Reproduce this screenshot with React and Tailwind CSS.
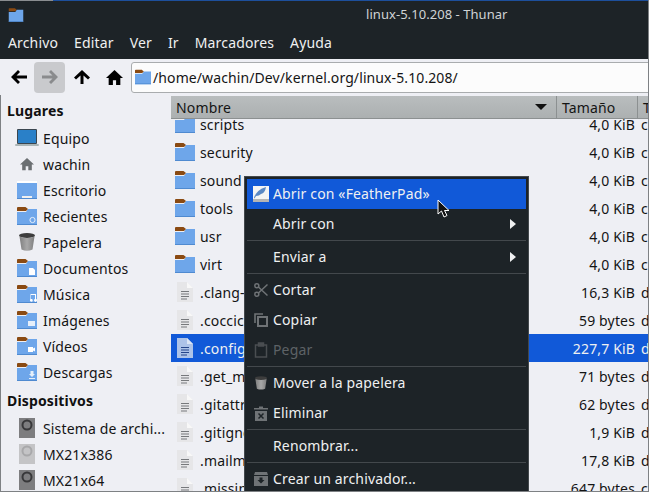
const Folder = ({ badge, className = "" }) => (
  <svg width="20" height="20" viewBox="0 0 20 20" className={"shrink-0 " + className}>
    <path d="M0 6 L9 6 L11 3 H20 V19 H0 Z" fill="#6ea6ea" />
    <rect x="0" y="18" width="20" height="1" fill="#4f8ad0" />
    <path d="M0 2 Q0 1 1 1 H8.5 L11 3 L9 5 H0 Z" fill="#8a4a12" />
    {badge === "clock" && (
      <circle cx="15.5" cy="14" r="2.6" fill="none" stroke="#e6effa" strokeWidth="1" />
    )}
    {badge === "doc" && <path d="M12 10 H16 L18 12 V17 H12 Z" fill="#fff" />}
    {badge === "music" && (
      <path d="M13 16 a1.4 1.4 0 1 0 1 -1 V11 H18 V15 a1.4 1.4 0 1 0 1 0 V10 H13.5 V14.5 Z" fill="#fff" />
    )}
    {badge === "image" && <rect x="11" y="11" width="7" height="5" fill="#e6effa" />}
    {badge === "video" && <path d="M11 11 H16 V12.5 L18 11.5 V15.5 L16 14.5 V16 H11 Z" fill="#fff" />}
    {badge === "down" && <path d="M13.5 9 H16.5 V12 H18 L15 15 L12 12 H13.5 Z M12 16 H18 V17 H12 Z" fill="#e6effa" />}
  </svg>
);

const Desktop = () => (
  <svg width="20" height="20" viewBox="0 0 20 20" className="shrink-0">
    <rect x="0" y="1" width="20" height="2" fill="#fff" />
    <rect x="0" y="3" width="20" height="16" fill="#6ea6ea" />
    <rect x="5" y="16" width="10" height="2" fill="#f0f0f0" />
    <rect x="0" y="18" width="20" height="1" fill="#4f8ad0" />
  </svg>
);

const Laptop = () => (
  <svg width="24" height="18" viewBox="0 0 24 18" className="shrink-0 -mx-0.5">
    <rect x="2" y="0" width="20" height="15" rx="1" fill="#3a4650" />
    <rect x="3" y="1" width="18" height="13" fill="#2a80c8" />
    <rect x="0" y="15" width="24" height="2" rx="1" fill="#a9b4b6" />
  </svg>
);

const Home = ({ fill = "#6b6f72", size = 14 }) => (
  <svg width={size} height={size} viewBox="0 0 16 16" className="shrink-0">
    <path d="M8 1 L16 8.5 H13.5 V15 H9.5 V10.5 H6.5 V15 H2.5 V8.5 H0 Z" fill={fill} />
  </svg>
);

const Trash = ({ w = 16, h = 18 }) => (
  <svg width={w} height={h} viewBox="0 0 16 18" className="shrink-0">
    <defs>
      <linearGradient id="bin" x1="0" x2="1" y1="0" y2="0">
        <stop offset="0" stopColor="#7f7f7f" />
        <stop offset="0.5" stopColor="#a8a8a8" />
        <stop offset="1" stopColor="#7f7f7f" />
      </linearGradient>
    </defs>
    <ellipse cx="8" cy="2.5" rx="8" ry="2.5" fill="#3d3d3d" />
    <path d="M0.5 3.5 Q8 6.5 15.5 3.5 L13.5 16.5 Q8 19 2.5 16.5 Z" fill="url(#bin)" />
  </svg>
);

const Drive = ({ faded }) => (
  <svg width="16" height="20" viewBox="0 0 16 20" className="shrink-0">
    <rect x="0" y="0" width="16" height="20" fill={faded ? "#c4c4c6" : "#7d7d7f"} />
    <circle cx="8" cy="7" r="4.5" fill={faded ? "#c4c4c6" : "#7d7d7f"} stroke={faded ? "#a8a8aa" : "#38383a"} strokeWidth="2" />
  </svg>
);

const FileIcon = ({ selected }) => (
  <svg width="16" height="22" viewBox="0 0 16 22" className="shrink-0">
    <path d="M0 1 H10 L16 7 V21 H0 Z" fill={selected ? "#adc3e8" : "#e6e6e8"} />
    <path d="M10 1 L16 7 H10 Z" fill={selected ? "#dbe5f5" : "#f8f8f8"} />
    <path d="M4 10.5 H12 M4 13 H12 M4 15.5 H12 M4 18 H10" stroke={selected ? "#26468a" : "#77797c"} strokeWidth="1" />
  </svg>
);

const places = [
  ["Equipo", <Laptop />],
  ["wachin", <span className="flex w-5 justify-center"><Home /></span>],
  ["Escritorio", <Desktop />],
  ["Recientes", <Folder badge="clock" />],
  ["Papelera", <span className="flex w-5 justify-center"><Trash /></span>],
  ["Documentos", <Folder badge="doc" />],
  ["Música", <Folder badge="music" />],
  ["Imágenes", <Folder badge="image" />],
  ["Vídeos", <Folder badge="video" />],
  ["Descargas", <Folder badge="down" />],
];

const devices = [
  ["Sistema de archi...", false],
  ["MX21x386", true],
  ["MX21x64", false],
];

const files = [
  ["scripts", "4,0 KiB", "c"],
  ["security", "4,0 KiB", "c"],
  ["sound", "4,0 KiB", "c"],
  ["tools", "4,0 KiB", "c"],
  ["usr", "4,0 KiB", "c"],
  ["virt", "4,0 KiB", "c"],
  [".clang-format", "16,3 KiB", "d"],
  [".cocciconfig", "59 bytes", "d"],
  [".config", "227,7 KiB", "d"],
  [".get_maintainer.ignore", "71 bytes", "d"],
  [".gitattributes", "62 bytes", "d"],
  [".gitignore", "1,9 KiB", "d"],
  [".mailmap", "17,8 KiB", "d"],
  [".missing-syscalls", "647 bytes", "c"],
];

const Separator = () => <div className="my-px h-px shrink-0 bg-[#43484c]" />;

const MenuItem = ({ children, icon, arrow, active, disabled }) => (
  <div className={`flex h-[30px] shrink-0 items-center ${active ? "bg-[#1159d8]" : ""} ${disabled ? "text-[#5d6266]" : "text-[#eff0f1]"}`}>
    <span className="flex w-[26px] shrink-0 justify-center pl-px">{icon}</span>
    <span className="flex-1">{children}</span>
    {arrow && (
      <svg width="6" height="10" viewBox="0 0 6 10" className="mr-[10px]">
        <path d="M0 0 L6 5 L0 10 Z" fill="#eff0f1" />
      </svg>
    )}
  </div>
);

const gray = "#6f7376";

const ContextMenu = () => (
  <div className="absolute left-[244px] top-[176px] flex h-[316px] w-[285px] flex-col overflow-hidden border border-[#43484c] bg-[#1d2327] p-[2px] leading-none">
    <MenuItem
      active
      icon={
        <svg width="16" height="16" viewBox="0 0 16 16">
          <rect width="16" height="16" fill="#f4f4f4" />
          <rect y="13" width="16" height="3" fill="#b5b5b5" />
          <path d="M1 12 Q3 4 13 1 Q12 7 8 8 Q6 10 3 10 L1.5 12.5 Z" fill="#5a88c4" />
        </svg>
      }
    >
      Abrir con «FeatherPad»
    </MenuItem>
    <MenuItem arrow>Abrir con</MenuItem>
    <Separator />
    <MenuItem arrow>Enviar a</MenuItem>
    <Separator />
    <MenuItem
      icon={
        <svg width="14" height="14" viewBox="0 0 14 14" fill="none" stroke={gray} strokeWidth="1.5">
          <circle cx="2.8" cy="2.8" r="2" />
          <circle cx="2.8" cy="11.2" r="2" />
          <path d="M4.4 4 L13.5 12.5 M4.4 10 L13.5 1.5" />
        </svg>
      }
    >
      Cortar
    </MenuItem>
    <MenuItem
      icon={
        <svg width="14" height="14" viewBox="0 0 14 14" fill="none" stroke={gray} strokeWidth="1.6">
          <path d="M1 10 V1 H9" />
          <rect x="4" y="4" width="9" height="9" strokeWidth="2" />
        </svg>
      }
    >
      Copiar
    </MenuItem>
    <MenuItem
      disabled
      icon={
        <svg width="14" height="16" viewBox="0 0 14 16" fill="none" stroke="#4a4e51" strokeWidth="1.5">
          <rect x="1.5" y="3" width="11" height="12" />
          <rect x="4.5" y="1" width="5" height="3" fill="#4a4e51" />
        </svg>
      }
    >
      Pegar
    </MenuItem>
    <Separator />
    <MenuItem icon={<Trash w={12} h={14} />}>Mover a la papelera</MenuItem>
    <MenuItem
      icon={
        <svg width="14" height="15" viewBox="0 0 14 15">
          <path d="M0 2 H5 V0.5 H9 V2 H14 V3.5 H0 Z M1 5 H13 V15 H1 Z" fill={gray} />
          <path d="M4.5 7.5 L9.5 12.5 M9.5 7.5 L4.5 12.5" stroke="#1d2327" strokeWidth="1.5" />
        </svg>
      }
    >
      Eliminar
    </MenuItem>
    <Separator />
    <MenuItem>Renombrar...</MenuItem>
    <Separator />
    <MenuItem
      icon={
        <svg width="14" height="14" viewBox="0 0 14 14">
          <path d="M1 0 H13 L14 3 H0 Z M0 4 H14 V14 H0 Z" fill={gray} />
          <path d="M5.5 5.5 H8.5 V8 H10.5 L7 11.5 L3.5 8 H5.5 Z" fill="#1d2327" />
        </svg>
      }
    >
      Crear un archivador...
    </MenuItem>
  </div>
);

const App = () => (
  <div className="relative flex h-[492px] w-[649px] flex-col overflow-hidden border-r border-b border-[#7e8184] bg-[#eeeff4] font-['Noto_Sans',sans-serif] text-[14px] tracking-[0.15px] text-[#141414]">
    {/* barra de titulo */}
    <div className="h-[28px] shrink-0 bg-[#1d2327]">
      <div className="flex h-[2px]">
        <div className="h-px w-[53px] bg-[#8a8d90]" />
        <div className="h-px flex-1 bg-[#1d4f9c]" />
      </div>
      <div className="flex h-[26px] items-center pl-2">
        <Folder className="-ml-0.5 scale-75" />
        <span className="ml-[340px] text-[13px] tracking-[0.05px] text-[#d0d3d5]">linux-5.10.208 - Thunar</span>
      </div>
    </div>

    {/* menu */}
    <div className="flex h-[31px] shrink-0 items-center gap-[16px] bg-[#1d2327] pb-[2px] pl-2 text-[#eff0f1]">
      {["Archivo", "Editar", "Ver", "Ir", "Marcadores", "Ayuda"].map((m) => (
        <span key={m}>{m}</span>
      ))}
    </div>

    {/* barra de herramientas */}
    <div className="flex h-[36px] shrink-0 items-center pl-[4px]">
      <div className="flex h-[31px] w-[30px] shrink-0 items-center justify-center">
        <svg width="16" height="14" viewBox="0 0 16 14"><path d="M7 0 L0 7 L7 14 L9 12 L5.5 8.5 H16 V5.5 H5.5 L9 2 Z" fill="#000" /></svg>
      </div>
      <div className="flex h-[31px] w-[31px] shrink-0 items-center justify-center rounded-sm bg-[#c9cacd]">
        <svg width="16" height="14" viewBox="0 0 16 14"><path d="M9 0 L16 7 L9 14 L7 12 L10.5 8.5 H0 V5.5 H10.5 L7 2 Z" fill="#8a8b8d" /></svg>
      </div>
      <div className="flex h-[31px] w-[34px] shrink-0 items-center justify-center">
        <svg width="16" height="14" viewBox="0 0 16 14"><path d="M8 0 L16 7.5 L14 9.5 L9.5 5.5 V14 H6.5 V5.5 L2 9.5 L0 7.5 Z" fill="#000" /></svg>
      </div>
      <div className="flex h-[31px] w-[30px] shrink-0 items-center justify-center">
        <Home fill="#000" size={17} />
      </div>
      <div className="ml-[2px] -mr-2 flex h-[31px] flex-1 items-center rounded-[3px] border border-[#a9acae] bg-[#fcfcfc] pl-px">
        <Folder className="scale-[0.8]" />
        <span className="tracking-[0.1px]">/home/wachin/Dev/kernel.org/linux-5.10.208/</span>
      </div>
    </div>

    <div className="flex min-h-0 flex-1 border-l border-[#7e8184]">
      {/* panel lateral */}
      <aside className="w-[170px] shrink-0 overflow-hidden pt-[4px]">
        <div className="flex h-[23px] items-center pl-[6px] font-bold text-[#111]">Lugares</div>
        <div className="mt-[3px]">
          {places.map(([name, icon]) => (
            <div key={name} className="flex h-[26px] items-center gap-[6px] pl-[16px]">
              {icon}
              <span>{name}</span>
            </div>
          ))}
        </div>
        <div className="flex h-[30px] items-center pl-[6px] font-bold text-[#111]">Dispositivos</div>
        {devices.map(([name, faded]) => (
          <div key={name} className="flex h-[26px] items-center gap-[8px] whitespace-nowrap pl-[18px]">
            <Drive faded={faded} />
            <span>{name}</span>
          </div>
        ))}
      </aside>

      {/* lista de archivos */}
      <main className="flex min-w-0 flex-1 flex-col">
        <div className="z-10 mt-px flex h-[23px] shrink-0 items-center border-b border-[#8c9091] bg-gradient-to-b from-[#b9bdbe] to-[#acb0b1]">
          <div className="flex h-full w-[386px] shrink-0 items-center justify-between border-r border-[#8c9091] px-[5px]">
            <span>Nombre</span>
            <svg width="12" height="6" viewBox="0 0 12 6" className="mr-[4px]"><path d="M0 0 H12 L6 6 Z" fill="#111" /></svg>
          </div>
          <div className="flex h-full w-[81px] shrink-0 items-center border-r border-[#8c9091] px-[5px]">Tamaño</div>
          <div className="px-[5px]">T</div>
        </div>
        <div className="-mt-[9px] min-h-0 flex-1">
          {files.map(([name, size, type]) => {
            const selected = name === ".config";
            return (
              <div key={name} className={`flex h-[28px] items-center whitespace-nowrap ${selected ? "bg-[#1159d8] text-[#eff0f1]" : ""}`}>
                <div className="flex w-[386px] shrink-0 items-center gap-[5px] pl-[4px]">
                  {name.startsWith(".") ? (
                    <span className="flex w-5 justify-center"><FileIcon selected={selected} /></span>
                  ) : (
                    <Folder />
                  )}
                  <span>{name}</span>
                </div>
                <div className="w-[80px] shrink-0 pr-[2px] text-right">{size}</div>
                <div className="pl-[4px]">{type}</div>
              </div>
            );
          })}
        </div>
      </main>
    </div>

    <ContextMenu />

    {/* cursor */}
    <svg width="14" height="20" viewBox="0 0 14 20" className="absolute left-[437px] top-[199px]">
      <path d="M1 1 V15 L4.5 12 L7 18 L10 16.5 L7.5 11.5 H12 Z" fill="#111" stroke="#fff" strokeWidth="1" />
    </svg>
  </div>
);

export default App;
